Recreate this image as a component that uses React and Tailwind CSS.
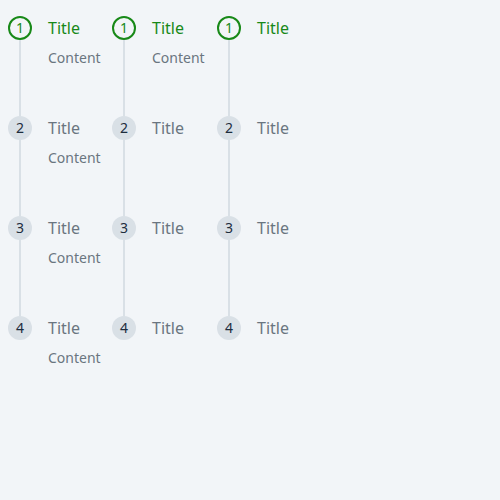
const COLUMNS = [
  { width: 'w-[104px]', content: [true, true, true, true] },
  { width: 'w-[105px]', content: [true, false, false, false] },
  { width: 'w-[105px]', content: [false, false, false, false] },
]

function Step({ n, active, last, content }) {
  return (
    <div className={`flex gap-4 ${last ? '' : 'h-[100px]'}`}>
      <div className="flex w-6 flex-col items-center">
        <div
          className={`flex h-6 w-6 shrink-0 items-center justify-center rounded-full text-[14px] leading-none ${
            active
              ? 'border-2 border-[#188918] text-[#188918]'
              : 'bg-[#d9e0e6] text-[#1d2d3e]'
          }`}
        >
          {n}
        </div>
        {!last && <div className="w-[2px] flex-1 bg-[#d9e0e6]" />}
      </div>
      <div className="flex flex-col">
        <p className={`text-base leading-6 ${active ? 'text-[#188918]' : 'text-[#6a7580]'}`}>Title</p>
        {content && <p className="mt-2 text-sm leading-5 text-[#6a7580]">Content</p>}
      </div>
    </div>
  )
}

export default function App() {
  return (
    <div className="min-h-[500px] bg-[#f2f5f8] pl-2 pt-4 font-['Noto_Sans',sans-serif]">
      <div className="flex items-start">
        {COLUMNS.map((col, ci) => (
          <div key={ci} className={`flex flex-col ${col.width}`}>
            {[1, 2, 3, 4].map((n, i) => (
              <Step key={n} n={n} active={n === 1} last={n === 4} content={col.content[i]} />
            ))}
          </div>
        ))}
      </div>
    </div>
  )
}
